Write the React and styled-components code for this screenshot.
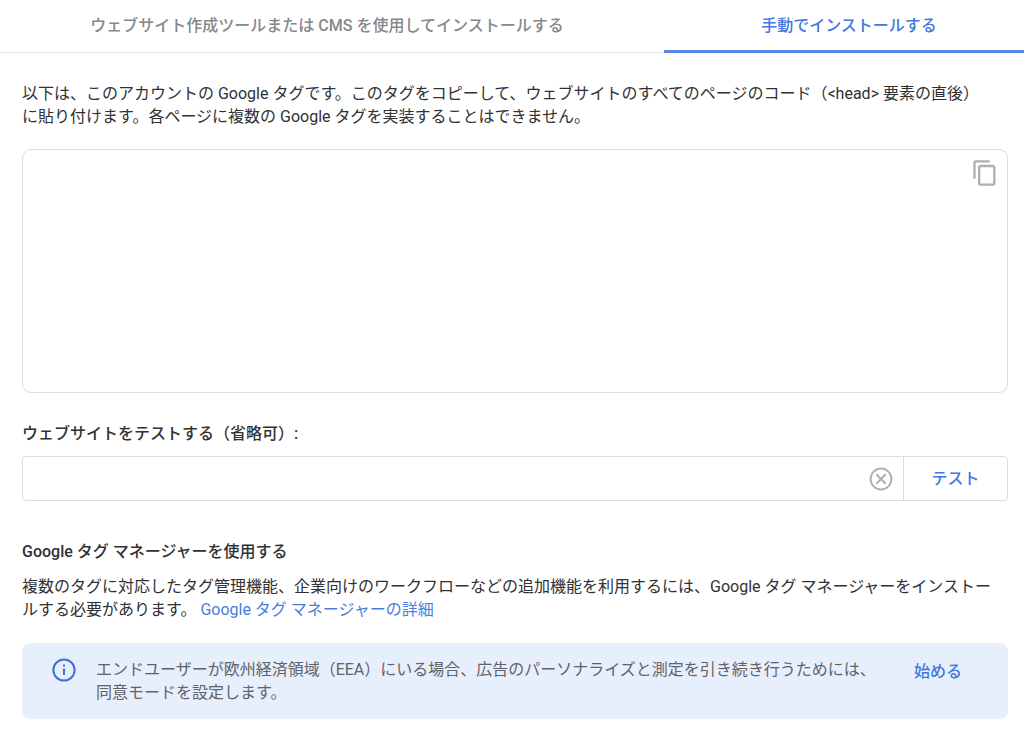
import React, { useState } from 'react';
import styled, { createGlobalStyle } from 'styled-components';

const App = () => {
  const [activeTab, setActiveTab] = useState('manual');
  const [tagCode, setTagCode] = useState('');
  const [siteUrl, setSiteUrl] = useState('');

  const onCopyTag = () => {
    navigator.clipboard.writeText(tagCode);
  };

  const onSubmitHandler = (e) => {
    e.preventDefault();
  };

  return (
    <>
      <GlobalStyle />
      <TabList role='tablist'>
        <Tab
          type='button'
          role='tab'
          $active={activeTab === 'cms'}
          aria-selected={activeTab === 'cms'}
          onClick={() => setActiveTab('cms')}
        >
          ウェブサイト作成ツールまたは CMS を使用してインストールする
        </Tab>
        <Tab
          type='button'
          role='tab'
          $active={activeTab === 'manual'}
          aria-selected={activeTab === 'manual'}
          onClick={() => setActiveTab('manual')}
        >
          手動でインストールする
        </Tab>
      </TabList>

      <Content>
        <Paragraph>
          以下は、このアカウントの Google
          タグです。このタグをコピーして、ウェブサイトのすべてのページのコード（&lt;head&gt;
          要素の直後）に貼り付けます。各ページに複数の Google
          タグを実装することはできません。
        </Paragraph>

        <CodeBox>
          <CodeArea
            aria-label='Google タグ'
            value={tagCode}
            onChange={(e) => setTagCode(e.target.value)}
          />
          <IconButton type='button' aria-label='コピー' onClick={onCopyTag}>
            <svg width='28' height='28' viewBox='0 0 24 24' fill='currentColor'>
              <path d='M16 1H4c-1.1 0-2 .9-2 2v14h2V3h12V1zm3 4H8c-1.1 0-2 .9-2 2v14c0 1.1.9 2 2 2h11c1.1 0 2-.9 2-2V7c0-1.1-.9-2-2-2zm0 16H8V7h11v14z' />
            </svg>
          </IconButton>
        </CodeBox>

        <TestForm onSubmit={onSubmitHandler}>
          <Label htmlFor='site-url'>ウェブサイトをテストする（省略可）:</Label>
          <UrlBox>
            <UrlInput
              id='site-url'
              type='text'
              value={siteUrl}
              onChange={(e) => setSiteUrl(e.target.value)}
            />
            <IconButton
              type='button'
              aria-label='クリア'
              onClick={() => setSiteUrl('')}
            >
              <svg
                width='24'
                height='24'
                viewBox='0 0 24 24'
                fill='none'
                stroke='currentColor'
                strokeWidth='2'
              >
                <circle cx='12' cy='12' r='10.4' />
                <path d='M7.3 7.3l9.4 9.4M16.7 7.3l-9.4 9.4' />
              </svg>
            </IconButton>
            <TestButton type='submit'>テスト</TestButton>
          </UrlBox>
        </TestForm>

        <Title>Google タグ マネージャーを使用する</Title>
        <Paragraph>
          複数のタグに対応したタグ管理機能、企業向けのワークフローなどの追加機能を利用するには、Google
          タグ マネージャーをインストールする必要があります。{' '}
          <DetailLink href='#'>Google タグ マネージャーの詳細</DetailLink>
        </Paragraph>

        <Notice>
          <InfoIcon width='24' height='24' viewBox='0 0 24 24' fill='none'>
            <circle
              cx='12'
              cy='12'
              r='10.6'
              stroke='currentColor'
              strokeWidth='2'
            />
            <path d='M11 10.5h2V17h-2zM11 6.5h2v2h-2z' fill='currentColor' />
          </InfoIcon>
          <NoticeText>
            エンドユーザーが欧州経済領域（EEA）にいる場合、広告のパーソナライズと測定を引き続き行うためには、同意モードを設定します。
          </NoticeText>
          <StartButton type='button'>始める</StartButton>
        </Notice>
      </Content>
    </>
  );
};

const GlobalStyle = createGlobalStyle`
  * {
    box-sizing: border-box;
  }

  body {
    margin: 0;
    background-color: #fff;
    color: #303134;
    font-family: Roboto, 'Noto Sans CJK JP', sans-serif;
    font-size: 16px;
    line-height: 23px;
  }

  button,
  input,
  textarea {
    font: inherit;
  }
`;

const TabList = styled.div`
  display: grid;
  grid-template-columns: 664fr 360fr;
  height: 53px;
  border-bottom: 1px solid #e4e5e7;
`;

const Tab = styled.button`
  height: 53px;
  padding: 0 10px 0 0;
  background: none;
  border: none;
  border-bottom: 3px solid
    ${({ $active }) => ($active ? '#5b87e5' : 'transparent')};
  color: ${({ $active }) => ($active ? '#4378de' : '#85888c')};
  font-weight: 500;
  cursor: pointer;

  &:last-child {
    padding: 0 0 0 10px;
  }
`;

const Content = styled.main`
  padding: 29px 16px 11px 22px;
`;

const Paragraph = styled.p`
  margin: 0;
  padding-right: 16px;
`;

const CodeBox = styled.div`
  display: flex;
  align-items: flex-start;
  height: 244px;
  margin: 21px 0 29px;
  padding: 9px 8px 10px 12px;
  border: 1px solid #dadce0;
  border-radius: 9px;
`;

const CodeArea = styled.textarea`
  flex-grow: 1;
  height: 100%;
  padding: 0;
  border: none;
  outline: none;
  resize: none;
`;

const IconButton = styled.button`
  display: flex;
  padding: 0;
  background: none;
  border: none;
  color: #aeb0b3;
  cursor: pointer;
`;

const TestForm = styled.form`
  margin-bottom: 39px;
`;

const Label = styled.label`
  display: block;
  margin-bottom: 11px;
  font-weight: 500;
`;

const UrlBox = styled.div`
  display: flex;
  align-items: center;
  height: 45px;
  border: 1px solid #dadce0;
  border-radius: 4px;
`;

const UrlInput = styled.input`
  flex-grow: 1;
  min-width: 0;
  height: 100%;
  padding: 0 12px;
  background: none;
  border: none;
  outline: none;
`;

const TestButton = styled.button`
  width: 104px;
  height: 100%;
  margin-left: 10px;
  padding: 0;
  background: none;
  border: none;
  border-left: 1px solid #dadce0;
  color: #4378de;
  font-weight: 500;
  cursor: pointer;
`;

const Title = styled.h2`
  margin: 0 0 12px;
  font-size: 16px;
  font-weight: 500;
`;

const DetailLink = styled.a`
  color: #4a7de0;
  text-decoration: none;
`;

const Notice = styled.section`
  display: flex;
  align-items: flex-start;
  margin-top: 22px;
  padding: 15px 46px 15px 30px;
  background-color: #e8effc;
  border-radius: 8px;
`;

const InfoIcon = styled.svg`
  flex-shrink: 0;
  color: #3f6fd8;
`;

const NoticeText = styled.p`
  flex: 1;
  margin: 0 32px 0 20px;
  color: #5f6368;
`;

const StartButton = styled.button`
  padding: 2px 0;
  background: none;
  border: none;
  color: #4378de;
  font-weight: 500;
  white-space: nowrap;
  cursor: pointer;
`;

export default App;
